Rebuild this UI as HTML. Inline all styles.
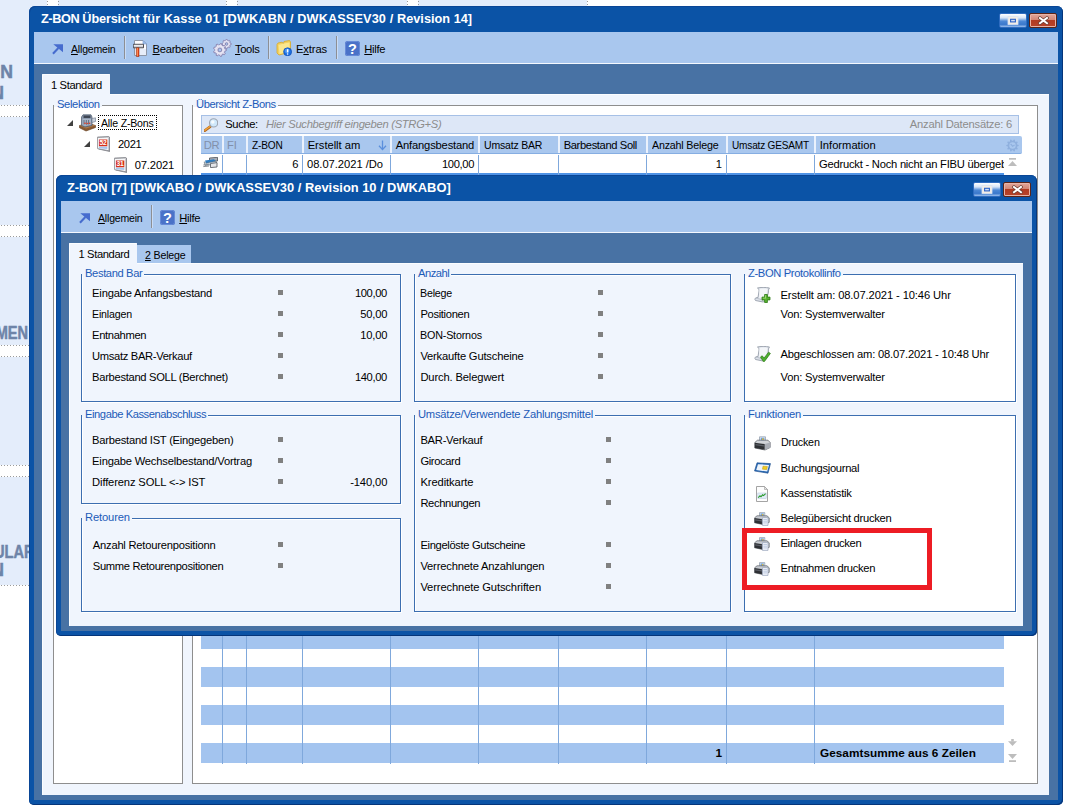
<!DOCTYPE html>
<html lang="de">
<head>
<meta charset="utf-8">
<title>Z-BON Übersicht</title>
<style>
*{box-sizing:border-box;margin:0;padding:0}
html,body{width:1065px;height:811px;overflow:hidden}
body{position:relative;background:#fff;font-family:"Liberation Sans",sans-serif;font-size:11.2px;color:#000;line-height:14px}
.a{position:absolute}
.t{position:absolute;white-space:nowrap;line-height:14px;height:14px}
.b{font-weight:bold}
u{text-decoration:underline;text-underline-offset:1px}
.tile{position:absolute;background:#e4edfb}
.hd{position:absolute;height:1px;background:repeating-linear-gradient(90deg,transparent 0 1px,#9a9a9a 1px 2px,transparent 2px 3px)}
.vd{position:absolute;width:1px;background:repeating-linear-gradient(180deg,transparent 0 1px,#9a9a9a 1px 2px,transparent 2px 3px)}
.bgt{position:absolute;font-weight:bold;font-size:17.6px;line-height:17px;color:#6e84a8;-webkit-text-stroke:.5px #6e84a8;white-space:nowrap}
.win{position:absolute;background:#0b53a6;box-shadow:inset 1px 1px 0 #0a4696,inset -1px -1px 0 #05357a}
.ttl{position:absolute;color:#fff;font-weight:bold;font-size:13.5px;line-height:16px;white-space:pre}
.tb{position:absolute;background:#a9c7ee;border-bottom:1px solid #f4f8fe}
.cl{position:absolute;background:#4872a4}
.pg{position:absolute;background:#f0f5fd;box-shadow:inset 1px 1px 0 #fbfdff}
.sep{position:absolute;width:2px;background:linear-gradient(90deg,#8d8f94 0 1px,#c9dcf6 1px 2px)}
.gb{position:absolute;border:1px solid #3c6eb0;box-shadow:1px 1px 0 #fff,inset 1px 1px 0 #fff}
.gbg{position:absolute;border:1px solid #8e8e8e;background:#fff}
.gl{position:absolute;color:#1c5bb8;background:#f0f5fd;white-space:nowrap;line-height:13px;height:9px;padding:0 2px 0 3px}
.sq{position:absolute;width:5px;height:5px;background:#808080}
.bmax{position:absolute;width:28px;height:15px;border-radius:2px;background:linear-gradient(180deg,#ffffff 0%,#d5e4f8 30%,#4c88d6 55%,#3a78cc 80%,#9cc0ee 100%);border:1px solid #2f6cc0}
.bmax i{position:absolute;left:8px;top:2px;width:10px;height:8px;background:#efe9e2;border:1px solid #d5deec}
.bmax i:after{content:"";position:absolute;left:1px;top:1px;width:6px;height:4px;border:1px solid #2a64c0;background:#dfe8f5}
.bcls{position:absolute;width:28px;height:15px;border-radius:2px;background:linear-gradient(180deg,#e0a79c 0%,#d28675 45%,#b23b22 50%,#b8442b 100%);border:1px solid #5b2418;box-shadow:inset 0 0 0 1px #e7b4a8}
.stripe{position:absolute;background:#a3c4ef}
.vl{position:absolute;width:1px;background:#7fa8dc}
</style>
</head>
<body>
<div class="tile" style="left:0px;top:0;width:47px;height:105px"></div>
<div class="tile" style="left:58px;top:0;width:168px;height:105px"></div>
<div class="tile" style="left:237px;top:0;width:170px;height:105px"></div>
<div class="tile" style="left:418px;top:0;width:169px;height:105px"></div>
<div class="tile" style="left:0;top:117px;width:47px;height:108px"></div>
<div class="tile" style="left:0;top:237px;width:47px;height:108px"></div>
<div class="tile" style="left:0;top:357px;width:47px;height:108px"></div>
<div class="tile" style="left:0;top:477px;width:47px;height:108px"></div>
<div class="hd" style="left:0;top:105px;width:29px"></div>
<div class="hd" style="left:0;top:116px;width:29px"></div>
<div class="hd" style="left:0;top:225px;width:29px"></div>
<div class="hd" style="left:0;top:236px;width:29px"></div>
<div class="hd" style="left:0;top:345px;width:29px"></div>
<div class="hd" style="left:0;top:356px;width:29px"></div>
<div class="hd" style="left:0;top:465px;width:29px"></div>
<div class="hd" style="left:0;top:476px;width:29px"></div>
<div class="hd" style="left:0;top:585px;width:29px"></div>
<div class="vd" style="left:47px;top:0;height:6px"></div>
<div class="vd" style="left:58px;top:0;height:6px"></div>
<div class="vd" style="left:226px;top:0;height:6px"></div>
<div class="vd" style="left:237px;top:0;height:6px"></div>
<div class="vd" style="left:407px;top:0;height:6px"></div>
<div class="vd" style="left:418px;top:0;height:6px"></div>
<div class="vd" style="left:587px;top:0;height:6px"></div>
<div class="bgt" style="right:1052px;top:64px">N</div>
<div class="bgt" style="right:1061px;top:85px">N</div>
<div class="bgt" style="right:1036.5px;top:325px;transform:scaleX(.83);transform-origin:100% 50%">MEN</div>
<div class="bgt" style="left:-6px;top:543.5px;transform:scaleX(.83);transform-origin:0 50%">ULARE</div>
<div class="bgt" style="right:1061px;top:562px">N</div>
<div class="win" style="left:29px;top:6px;width:1034px;height:799px;border-radius:6px 6px 5px 5px"></div>
<div class="ttl" style="left:40.7px;top:11px;transform:scaleX(0.9420);transform-origin:0 50%"><span style="font-size:13.5px;letter-spacing:-0.43px;">Z-BON </span><span style="font-size:13.5px;letter-spacing:-0.17px;">Übersicht </span><span style="font-size:13.5px;letter-spacing:0.09px;">für Kasse 01 </span><span style="font-size:13.5px;letter-spacing:0.13px;">[DWKABN / </span><span style="font-size:13.5px;letter-spacing:0.12px;">DWKASSEV30 / </span><span style="font-size:13.5px;letter-spacing:0.02px;">Revision 14]</span></div>
<div class="bmax" style="left:999px;top:13px"><svg class="a" style="left:-1px;top:-1px" width="28" height="15" viewBox="0 0 28 15"><rect x="9" y="3.5" width="10" height="8" fill="#f2ede6" stroke="#dbe4f2" stroke-width=".8"/><rect x="11.6" y="6.3" width="4.8" height="2.6" fill="#d4e0f4" stroke="#2a62c8" stroke-width="1.1"/></svg></div>
<div class="bcls" style="left:1029px;top:13px"><svg class="a" style="left:8px;top:2px" width="11" height="9" viewBox="0 0 11 9"><path d="M2 2 L9 7.2 M9 2 L2 7.2" stroke="#6a3a30" stroke-width="3.4" stroke-linecap="square"/><path d="M2 2 L9 7.2 M9 2 L2 7.2" stroke="#fff" stroke-width="2" stroke-linecap="square"/></svg></div>
<div class="tb" style="left:34px;top:32px;width:1024px;height:32px"></div>
<div class="cl" style="left:34px;top:64px;width:1024px;height:736px"></div>
<svg class="a" style="left:52px;top:44px" width="12" height="11" viewBox="0 0 12 11"><path d="M1.3 0.2 H11 V8.3Z M6.9 4.9 L1.7 10.4 L0.2 9 L5.4 3.5Z" fill="#466cce"/></svg>
<div class="t" style="left:70.5px;top:42px;letter-spacing:-0.20px;transform:scaleX(0.940);transform-origin:0 50%;"><u>A</u>llgemein</div>
<div class="sep" style="left:124px;top:36px;height:23px"></div>
<svg class="a" style="left:133px;top:40px" width="15" height="17" viewBox="0 0 15 17"><path d="M1.5 0.5H10L13.5 4V15.5H1.5Z" fill="#fdfdff" stroke="#8e96a6"/><path d="M10 0.5V4H13.5Z" fill="#9ec0ee" stroke="#7d9fd0" stroke-width=".6"/><path d="M2 9H13V15H2Z" fill="#dde6f6" opacity=".7"/><path d="M0.3 4.3H10.5V7.8H0.3Z" fill="#cfcfd4" stroke="#3c3c42" stroke-width=".9"/><path d="M0.8 4.9H10V5.8H0.8Z" fill="#f4f4f6"/><path d="M3.4 7.8H6V16.6H3.4Z" fill="#e8431c" stroke="#8c2a10" stroke-width=".5"/><path d="M3.9 8H4.8V16H3.9Z" fill="#ff9a5a"/></svg>
<div class="t" style="left:152.5px;top:42px;letter-spacing:-0.26px;"><u>B</u>earbeiten</div>
<svg class="a" style="left:213px;top:39px" width="19" height="18" viewBox="0 0 19 18"><path d="M18.28 4.54 L18.28 5.46 L17.04 6.05 L16.77 6.70 L17.23 7.98 L16.58 8.63 L15.30 8.17 L14.65 8.44 L14.06 9.68 L13.14 9.68 L12.55 8.44 L11.90 8.17 L10.62 8.63 L9.97 7.98 L10.43 6.70 L10.16 6.05 L8.92 5.46 L8.92 4.54 L10.16 3.95 L10.43 3.30 L9.97 2.02 L10.62 1.37 L11.90 1.83 L12.55 1.56 L13.14 0.32 L14.06 0.32 L14.65 1.56 L15.30 1.83 L16.58 1.37 L17.23 2.02 L16.77 3.30 L17.04 3.95Z M14.90 5.00 A1.3 1.3 0 1 0 12.30 5.00 A1.3 1.3 0 1 0 14.90 5.00Z" fill="#d9d7ec" stroke="#8682b0" stroke-width=".9" fill-rule="evenodd"/><path d="M16.48 4.39 L16.48 5.01 L16.36 5.63 L16.12 6.21 L15.77 6.73 L15.33 7.17 L14.81 7.52 L14.23 7.76 L13.61 7.88 L12.99 7.88 L12.37 7.76 L11.79 7.52 L11.27 7.17 L10.83 6.73 L10.48 6.21 L10.24 5.63 L10.12 5.01 L10.12 4.39 L10.24 3.77 L10.48 3.19 L10.83 2.67 L11.27 2.23 L11.79 1.88 L12.37 1.64 L12.99 1.52 L13.61 1.52 L14.23 1.64 L14.81 1.88 L15.33 2.23 L15.77 2.67 L16.12 3.19 L16.36 3.77Z M15.50 4.70 A2.2 2.2 0 1 0 11.10 4.70 A2.2 2.2 0 1 0 15.50 4.70Z" fill="#efeef8" opacity=".6" fill-rule="evenodd"/><path d="M13.38 10.43 L13.38 11.57 L11.83 12.32 L11.52 13.16 L12.22 14.73 L11.50 15.60 L9.83 15.18 L9.06 15.62 L8.58 17.28 L7.47 17.48 L6.46 16.08 L5.58 15.93 L4.15 16.89 L3.17 16.32 L3.29 14.61 L2.72 13.93 L1.01 13.75 L0.62 12.68 L1.82 11.44 L1.82 10.56 L0.62 9.32 L1.01 8.25 L2.72 8.07 L3.29 7.39 L3.17 5.68 L4.15 5.11 L5.58 6.07 L6.46 5.92 L7.47 4.52 L8.58 4.72 L9.06 6.38 L9.83 6.82 L11.50 6.40 L12.22 7.27 L11.52 8.84 L11.83 9.68Z M8.80 11.00 A1.9 1.9 0 1 0 5.00 11.00 A1.9 1.9 0 1 0 8.80 11.00Z" fill="#dcdaee" stroke="#827eac" stroke-width=".9" fill-rule="evenodd"/><path d="M10.88 10.22 L10.88 10.98 L10.75 11.74 L10.49 12.46 L10.10 13.12 L9.61 13.71 L9.02 14.20 L8.36 14.59 L7.64 14.85 L6.88 14.98 L6.12 14.98 L5.36 14.85 L4.64 14.59 L3.98 14.20 L3.39 13.71 L2.90 13.12 L2.51 12.46 L2.25 11.74 L2.12 10.98 L2.12 10.22 L2.25 9.46 L2.51 8.74 L2.90 8.08 L3.39 7.49 L3.98 7.00 L4.64 6.61 L5.36 6.35 L6.12 6.22 L6.88 6.22 L7.64 6.35 L8.36 6.61 L9.02 7.00 L9.61 7.49 L10.10 8.08 L10.49 8.74 L10.75 9.46Z M9.50 10.60 A3 3 0 1 0 3.50 10.60 A3 3 0 1 0 9.50 10.60Z" fill="#f1f0f9" opacity=".6" fill-rule="evenodd"/></svg>
<div class="t" style="left:235px;top:42px;letter-spacing:-0.35px;"><u>T</u>ools</div>
<div class="sep" style="left:268px;top:36px;height:23px"></div>
<svg class="a" style="left:276px;top:40px" width="16" height="16" viewBox="0 0 16 16"><path d="M1 4.5 L2 3 L6 2.2 L7.5 3.5 L8 1.5 L13.5 0.5 L14.5 2 V12 L3 15 L1 13Z" fill="#f3d160" stroke="#d9a928" stroke-width=".8"/><path d="M2.5 5 L8 3.5 L13.5 2.5 V11.5 L3.5 14Z" fill="#fbe78e"/><circle cx="11.6" cy="11.8" r="4" fill="#1c70e4" stroke="#0e4cb0" stroke-width=".7"/><circle cx="11" cy="10.8" r="2.4" fill="#5aa2f6" opacity=".7"/><path d="M11.6 9.2V12.4" stroke="#fff" stroke-width="1.5"/><circle cx="11.6" cy="14" r=".8" fill="#fff"/></svg>
<div class="t" style="left:296px;top:42px;letter-spacing:-0.12px;">E<u>x</u>tras</div>
<div class="sep" style="left:336px;top:36px;height:23px"></div>
<svg class="a" style="left:345px;top:41px" width="15" height="15" viewBox="0 0 15 15"><rect x="0" y="0" width="15" height="15" rx="2.5" fill="#4a72c8"/><rect x="0.5" y="0.5" width="14" height="14" rx="2.2" fill="none" stroke="#6f92dc" stroke-width=".8"/><text x="7.5" y="12.6" text-anchor="middle" font-family="Liberation Sans,sans-serif" font-weight="bold" font-size="14.5" fill="#fff">?</text></svg>
<div class="t" style="left:364.3px;top:42px;letter-spacing:-0.28px;"><u>H</u>ilfe</div>
<div class="pg" style="left:42px;top:94px;width:1006.5px;height:700.5px"></div>
<div class="pg" style="left:42px;top:74px;width:68px;height:21px;border-radius:1px 1px 0 0"></div>
<div class="t" style="left:51px;top:77.5px;letter-spacing:-0.38px;">1 Standard</div>
<div class="gbg" style="left:53px;top:105px;width:130px;height:679px"></div>
<div class="gl" style="left:54px;top:98px"><span style="letter-spacing:-0.37px;">Selektion</span></div>
<svg class="a" style="left:67px;top:120px" width="6" height="6"><path d="M6 0V6H0Z" fill="#404040"/></svg>
<svg class="a" style="left:78.5px;top:114px" width="17" height="18" viewBox="0 0 17 18"><path d="M0.5 11.5 L10 9.5 L16.5 11.5 V13.5 L7 17 L0.5 13.8Z" fill="#8a5a32" stroke="#5e3a1c" stroke-width=".6"/><path d="M0.5 11.5 L10 9.5 L16.5 11.5 L7 14.5Z" fill="#b07a48"/><path d="M2.5 3 L4 0.8 H12 L13 3 V11.5 L6 13 L2.5 11.5Z" fill="#8d9bb0" stroke="#4e5a6c" stroke-width=".7"/><path d="M4.5 1.5 H11.5 V4 H4.5Z" fill="#3e4654"/><path d="M3.5 5 H12 V10.5 L6 12 L3.5 11Z" fill="#a9b6c8"/><path d="M13 4.5 L16.5 3.8 V7.5 L13 8.5Z" fill="#c9d1dc" stroke="#6c7686" stroke-width=".6"/><path d="M5 6V10.5 M7.3 6V10.8 M9.6 6V10.5" stroke="#59667a" stroke-width=".9"/><rect x="5.3" y="8.6" width="1.4" height="1.4" fill="#e0422a"/><rect x="7.6" y="8.8" width="1.4" height="1.4" fill="#e0422a"/><rect x="9.9" y="8.6" width="1.4" height="1.4" fill="#e0422a"/></svg>
<div class="a" style="left:98px;top:115px;width:59px;height:15px;border:1px dotted #000"></div>
<div class="t" style="left:101px;top:115.5px;letter-spacing:-0.20px;transform:scaleX(0.946);transform-origin:0 50%;">Alle Z-Bons</div>
<svg class="a" style="left:84px;top:141px" width="6" height="6"><path d="M6 0V6H0Z" fill="#404040"/></svg>
<svg class="a" style="left:97px;top:136px" width="13" height="16" viewBox="0 0 13 16"><path d="M1.6 1.6 L13 1 V16 L1.6 13.6Z" fill="#8e9096"/><path d="M0.5 1 L12 0.5 V14.8 L0.5 12.6Z" fill="#f6f6f8" stroke="#8a8c92" stroke-width=".8"/><path d="M2 1 V2 M4 0.9 V1.9 M6 0.8 V1.8 M8 0.7 V1.7 M10 0.6 V1.6" stroke="#55585e" stroke-width=".8"/><rect x="1.9" y="3.5" width="8.4" height="6.8" fill="#d6301c"/><path d="M1.9 10.8 H10.3 V13 L1.9 12.2Z" fill="#a6c6ee"/><text x="6.1" y="9.3" text-anchor="middle" font-family="Liberation Sans,sans-serif" font-weight="bold" font-size="6.6" fill="#fff" textLength="7.4" lengthAdjust="spacingAndGlyphs">52</text></svg>
<div class="t" style="left:118px;top:136.5px;letter-spacing:-0.40px;">2021</div>
<svg class="a" style="left:114px;top:157px" width="13" height="16" viewBox="0 0 13 16"><path d="M1.6 1.6 L13 1 V16 L1.6 13.6Z" fill="#8e9096"/><path d="M0.5 1 L12 0.5 V14.8 L0.5 12.6Z" fill="#f6f6f8" stroke="#8a8c92" stroke-width=".8"/><path d="M2 1 V2 M4 0.9 V1.9 M6 0.8 V1.8 M8 0.7 V1.7 M10 0.6 V1.6" stroke="#55585e" stroke-width=".8"/><rect x="1.9" y="3.5" width="8.4" height="6.8" fill="#d6301c"/><path d="M1.9 10.8 H10.3 V13 L1.9 12.2Z" fill="#a6c6ee"/><text x="6.1" y="9.3" text-anchor="middle" font-family="Liberation Sans,sans-serif" font-weight="bold" font-size="6.6" fill="#fff" textLength="7.4" lengthAdjust="spacingAndGlyphs">31</text></svg>
<div class="t" style="left:134.7px;top:157.5px;letter-spacing:-0.14px;">07.2021</div>
<div class="gbg" style="left:192px;top:105px;width:846px;height:679px"></div>
<div class="gl" style="left:193px;top:98px"><span style="letter-spacing:-0.42px;">Übersicht Z-Bons</span></div>
<div class="a" style="left:201px;top:115px;width:818px;height:19px;background:#dde7f7;border:1px solid #a6c0e6"></div>
<svg class="a" style="left:204px;top:117.5px" width="14" height="14" viewBox="0 0 14 14"><path d="M0.8 12.6 L6.2 8.6" stroke="#b0661c" stroke-width="2.6" stroke-linecap="round"/><path d="M0.9 12.2 L6 8.5" stroke="#f6a63c" stroke-width="1.4" stroke-linecap="round"/><circle cx="9.6" cy="4.9" r="4.1" fill="#cfe8fb" stroke="#9ea6b2" stroke-width="1.1"/><circle cx="8.8" cy="4" r="1.8" fill="#fff" opacity=".8"/></svg>
<div class="t" style="left:225.3px;top:117px;letter-spacing:-0.39px;">Suche:</div>
<div class="t" style="left:266px;top:117px;letter-spacing:-0.28px;font-style:italic;color:#8c8c8c">Hier Suchbegriff eingeben (STRG+S)</div>
<div class="t" style="right:52.9px;top:117px;letter-spacing:-0.20px;color:#8c8c8c">Anzahl Datensätze: 6</div>
<div class="a" style="left:201px;top:136px;width:821px;height:18px;background:#a9c7ee;border-bottom:1px solid #86aee2;border-radius:0 2px 2px 0"></div>
<div class="a" style="left:222px;top:136px;width:2px;height:17px;background:#eaf1fc"></div>
<div class="a" style="left:246px;top:136px;width:2px;height:17px;background:#eaf1fc"></div>
<div class="a" style="left:302px;top:136px;width:2px;height:17px;background:#eaf1fc"></div>
<div class="a" style="left:390px;top:136px;width:2px;height:17px;background:#eaf1fc"></div>
<div class="a" style="left:478px;top:136px;width:2px;height:17px;background:#eaf1fc"></div>
<div class="a" style="left:558px;top:136px;width:2px;height:17px;background:#eaf1fc"></div>
<div class="a" style="left:646px;top:136px;width:2px;height:17px;background:#eaf1fc"></div>
<div class="a" style="left:726px;top:136px;width:2px;height:17px;background:#eaf1fc"></div>
<div class="a" style="left:814px;top:136px;width:2px;height:17px;background:#eaf1fc"></div>
<div class="t" style="left:203.7px;top:138px;letter-spacing:-0.20px;color:#8290aa;text-shadow:1px 1px 0 #f2f7fetransform:scaleX(0.862);transform-origin:0 50%;">DR</div>
<div class="t" style="left:227px;top:138px;letter-spacing:-0.20px;color:#8290aa;text-shadow:1px 1px 0 #f2f7fetransform:scaleX(0.942);transform-origin:0 50%;">FI</div>
<div class="t" style="left:251.7px;top:138px;letter-spacing:-0.20px;transform:scaleX(0.902);transform-origin:0 50%;">Z-BON</div>
<div class="t" style="left:307.7px;top:138px;letter-spacing:-0.03px;">Erstellt am</div>
<div class="t" style="left:395.7px;top:138px;letter-spacing:-0.17px;">Anfangsbestand</div>
<div class="t" style="left:483.7px;top:138px;letter-spacing:-0.20px;transform:scaleX(0.938);transform-origin:0 50%;">Umsatz BAR</div>
<div class="t" style="left:563.7px;top:138px;letter-spacing:-0.38px;">Barbestand Soll</div>
<div class="t" style="left:651.7px;top:138px;letter-spacing:-0.20px;transform:scaleX(0.955);transform-origin:0 50%;">Anzahl Belege</div>
<div class="t" style="left:731.7px;top:138px;letter-spacing:-0.20px;transform:scaleX(0.899);transform-origin:0 50%;">Umsatz GESAMT</div>
<div class="t" style="left:819.7px;top:138px;">Information</div>
<svg class="a" style="left:378px;top:140px" width="9" height="11" viewBox="0 0 9 11"><path d="M4.5 0.5V9 M1 5.8 L4.5 9.6 L8 5.8" fill="none" stroke="#5b8fdc" stroke-width="1.3"/></svg>
<svg class="a" style="left:1005.5px;top:138.5px" width="13" height="13" viewBox="0 0 13 13"><path d="M12.68 6.01 L12.68 6.99 L11.17 7.62 L10.93 8.34 L11.79 9.74 L11.21 10.53 L9.62 10.15 L9.01 10.59 L8.87 12.23 L7.95 12.53 L6.88 11.29 L6.12 11.29 L5.05 12.53 L4.13 12.23 L3.99 10.59 L3.38 10.15 L1.79 10.53 L1.21 9.74 L2.07 8.34 L1.83 7.62 L0.32 6.99 L0.32 6.01 L1.83 5.38 L2.07 4.66 L1.21 3.26 L1.79 2.47 L3.38 2.85 L3.99 2.41 L4.13 0.77 L5.05 0.47 L6.12 1.71 L6.88 1.71 L7.95 0.47 L8.87 0.77 L9.01 2.41 L9.62 2.85 L11.21 2.47 L11.79 3.26 L10.93 4.66 L11.17 5.38Z M9.70 6.50 A3.2 3.2 0 1 0 3.30 6.50 A3.2 3.2 0 1 0 9.70 6.50Z" fill="#8fb0de" fill-rule="evenodd"/><path d="M4.6 4.8 L6.6 7.2 L8.6 6" fill="none" stroke="#8fb0de" stroke-width="1.2"/></svg>
<div class="stripe" style="left:201px;top:173px;width:803px;height:20px;background:#4f93e6"></div>
<div class="stripe" style="left:201px;top:211px;width:803px;height:20px"></div>
<div class="stripe" style="left:201px;top:249px;width:803px;height:20px"></div>
<div class="stripe" style="left:201px;top:287px;width:803px;height:20px"></div>
<div class="stripe" style="left:201px;top:325px;width:803px;height:20px"></div>
<div class="stripe" style="left:201px;top:363px;width:803px;height:20px"></div>
<div class="stripe" style="left:201px;top:401px;width:803px;height:20px"></div>
<div class="stripe" style="left:201px;top:439px;width:803px;height:20px"></div>
<div class="stripe" style="left:201px;top:477px;width:803px;height:20px"></div>
<div class="stripe" style="left:201px;top:515px;width:803px;height:20px"></div>
<div class="stripe" style="left:201px;top:553px;width:803px;height:20px"></div>
<div class="stripe" style="left:201px;top:591px;width:803px;height:20px"></div>
<div class="stripe" style="left:201px;top:629px;width:803px;height:20px"></div>
<div class="stripe" style="left:201px;top:667px;width:803px;height:20px"></div>
<div class="stripe" style="left:201px;top:705px;width:803px;height:20px"></div>
<div class="stripe" style="left:201px;top:743px;width:803px;height:20px"></div>
<div class="vl" style="left:222px;top:155px;height:609px"></div>
<div class="vl" style="left:246px;top:155px;height:609px"></div>
<div class="vl" style="left:302px;top:155px;height:609px"></div>
<div class="vl" style="left:390px;top:155px;height:609px"></div>
<div class="vl" style="left:478px;top:155px;height:609px"></div>
<div class="vl" style="left:558px;top:155px;height:609px"></div>
<div class="vl" style="left:646px;top:155px;height:609px"></div>
<div class="vl" style="left:726px;top:155px;height:609px"></div>
<div class="vl" style="left:814px;top:155px;height:609px"></div>
<svg class="a" style="left:203px;top:157px" width="15" height="11" viewBox="0 0 15 11"><path d="M6.5 1 L14.5 0.3 V4 L6.5 4.5Z" fill="#a9adb4" stroke="#4e535b" stroke-width=".8"/><path d="M2 3.6 L11 2.2 L13 4.2 L3 6.4Z" fill="#2f7cc0"/><path d="M1.2 4.8 L3 6.4 L13 4.2 L13.8 6.8 L2 8.6Z" fill="#d9e6f2" stroke="#5d6874" stroke-width=".6"/><path d="M7.5 6.5 L14 5.6 V10 L7.5 10.6Z" fill="#e3e5e8" stroke="#4e535b" stroke-width=".8"/><path d="M0.3 8 L6.5 7.2 M0.3 9.6 L6 9 " stroke="#7c828a" stroke-width=".9"/></svg>
<div class="t" style="right:766.5px;top:157px;">6</div>
<div class="t" style="left:307px;top:157px;letter-spacing:-0.04px;">08.07.2021 /Do</div>
<div class="t" style="right:590.9px;top:157px;letter-spacing:-0.35px;">100,00</div>
<div class="t" style="right:343.0px;top:157px;">1</div>
<div class="a" style="left:819px;top:157px;width:185px;height:14px;overflow:hidden"><div class="t" style="left:0px;top:0px;letter-spacing:-0.23px;">Gedruckt - Noch nicht an FIBU übergeben</div></div>
<div class="t b" style="right:343.0px;top:746px;font-size:11.8px;">1</div>
<div class="t b" style="left:820px;top:746px;font-size:11.8px;letter-spacing:0.02px;">Gesamtsumme aus 6 Zeilen</div>
<svg class="a" style="left:1008px;top:158px" width="10" height="9" viewBox="0 0 10 9"><rect x="1" y="0" width="7" height="1.7" fill="#bdbdbd"/><path d="M0 8 L4.5 3 L9 8Z" fill="#bdbdbd"/></svg><svg class="a" style="left:1008px;top:739px" width="10" height="8" viewBox="0 0 10 8"><rect x="3.2" y="0" width="2.6" height="2.4" fill="#bdbdbd"/><path d="M0 2.2 H9 L4.5 7Z" fill="#bdbdbd"/></svg><svg class="a" style="left:1008px;top:754px" width="10" height="9" viewBox="0 0 10 9"><path d="M0 0 H9 L4.5 5Z" fill="#bdbdbd"/><rect x="1" y="6.2" width="7" height="1.8" fill="#bdbdbd"/></svg>
<div class="win" style="left:56px;top:175px;width:981px;height:461px;border-radius:6px 6px 5px 5px"></div>
<div class="ttl" style="left:67.3px;top:180px;transform:scaleX(0.9543);transform-origin:0 50%"><span style="font-size:13.5px;letter-spacing:-0.04px;">Z-BON [7] </span><span style="font-size:13.5px;letter-spacing:0.03px;">[DWKABO / </span><span style="font-size:13.5px;letter-spacing:0.04px;">DWKASSEV30 / </span><span style="font-size:13.5px;letter-spacing:-0.02px;">Revision 10 / DWKABO]</span></div>
<div class="bmax" style="left:973px;top:182px"><svg class="a" style="left:-1px;top:-1px" width="28" height="15" viewBox="0 0 28 15"><rect x="9" y="3.5" width="10" height="8" fill="#f2ede6" stroke="#dbe4f2" stroke-width=".8"/><rect x="11.6" y="6.3" width="4.8" height="2.6" fill="#d4e0f4" stroke="#2a62c8" stroke-width="1.1"/></svg></div>
<div class="bcls" style="left:1003px;top:182px"><svg class="a" style="left:8px;top:2px" width="11" height="9" viewBox="0 0 11 9"><path d="M2 2 L9 7.2 M9 2 L2 7.2" stroke="#6a3a30" stroke-width="3.4" stroke-linecap="square"/><path d="M2 2 L9 7.2 M9 2 L2 7.2" stroke="#fff" stroke-width="2" stroke-linecap="square"/></svg></div>
<div class="tb" style="left:61px;top:201px;width:971px;height:32px"></div>
<div class="cl" style="left:61px;top:233px;width:971px;height:398px"></div>
<svg class="a" style="left:79px;top:213px" width="12" height="11" viewBox="0 0 12 11"><path d="M1.3 0.2 H11 V8.3Z M6.9 4.9 L1.7 10.4 L0.2 9 L5.4 3.5Z" fill="#466cce"/></svg>
<div class="t" style="left:97.5px;top:211px;letter-spacing:-0.20px;transform:scaleX(0.940);transform-origin:0 50%;"><u>A</u>llgemein</div>
<div class="sep" style="left:151px;top:205px;height:23px"></div>
<svg class="a" style="left:160px;top:210px" width="15" height="15" viewBox="0 0 15 15"><rect x="0" y="0" width="15" height="15" rx="2.5" fill="#4a72c8"/><rect x="0.5" y="0.5" width="14" height="14" rx="2.2" fill="none" stroke="#6f92dc" stroke-width=".8"/><text x="7.5" y="12.6" text-anchor="middle" font-family="Liberation Sans,sans-serif" font-weight="bold" font-size="14.5" fill="#fff">?</text></svg>
<div class="t" style="left:179.3px;top:211px;letter-spacing:-0.28px;"><u>H</u>ilfe</div>
<div class="a" style="left:136px;top:245px;width:55px;height:18px;background:#a9c7ee"></div>
<div class="t" style="left:144.8px;top:248px;letter-spacing:-0.20px;transform:scaleX(0.951);transform-origin:0 50%;"><u>2</u> Belege</div>
<div class="pg" style="left:69px;top:263px;width:954px;height:362.5px"></div>
<div class="pg" style="left:69px;top:243px;width:68px;height:21px;border-radius:1px 1px 0 0"></div>
<div class="t" style="left:78.5px;top:246.5px;letter-spacing:-0.38px;">1 Standard</div>
<div class="gb" style="left:81px;top:274px;width:320px;height:128px"></div>
<div class="gl" style="left:82px;top:267px"><span style="letter-spacing:-0.38px;">Bestand Bar</span></div>
<div class="t" style="left:92.1px;top:286px;letter-spacing:-0.20px;">Eingabe Anfangsbestand</div>
<div class="sq" style="left:278px;top:290px"></div>
<div class="t" style="right:678.0px;top:286px;letter-spacing:-0.35px;">100,00</div>
<div class="t" style="left:92.1px;top:307px;letter-spacing:-0.20px;transform:scaleX(0.951);transform-origin:0 50%;">Einlagen</div>
<div class="sq" style="left:278px;top:311px"></div>
<div class="t" style="right:677.8px;top:307px;letter-spacing:-0.20px;">50,00</div>
<div class="t" style="left:92.1px;top:328px;letter-spacing:-0.35px;">Entnahmen</div>
<div class="sq" style="left:278px;top:332px"></div>
<div class="t" style="right:677.8px;top:328px;letter-spacing:-0.20px;">10,00</div>
<div class="t" style="left:92.1px;top:349px;letter-spacing:-0.33px;">Umsatz BAR-Verkauf</div>
<div class="sq" style="left:278px;top:353px"></div>
<div class="t" style="left:92.1px;top:370px;letter-spacing:-0.31px;">Barbestand SOLL (Berchnet)</div>
<div class="sq" style="left:278px;top:374px"></div>
<div class="t" style="right:678.0px;top:370px;letter-spacing:-0.35px;">140,00</div>
<div class="gb" style="left:81px;top:415px;width:320px;height:89px"></div>
<div class="gl" style="left:82px;top:408px"><span style="letter-spacing:-0.44px;">Eingabe Kassenabschluss</span></div>
<div class="t" style="left:92.1px;top:433px;letter-spacing:-0.24px;">Barbestand IST (Eingegeben)</div>
<div class="sq" style="left:278px;top:437px"></div>
<div class="t" style="left:92.1px;top:454px;letter-spacing:-0.20px;">Eingabe Wechselbestand/Vortrag</div>
<div class="sq" style="left:278px;top:458px"></div>
<div class="t" style="left:92.1px;top:475px;letter-spacing:-0.14px;">Differenz SOLL &lt;-&gt; IST</div>
<div class="sq" style="left:278px;top:479px"></div>
<div class="t" style="right:677.7px;top:475px;letter-spacing:-0.11px;">-140,00</div>
<div class="gb" style="left:81px;top:518px;width:320px;height:94px"></div>
<div class="gl" style="left:82px;top:511px"><span style="letter-spacing:-0.14px;">Retouren</span></div>
<div class="t" style="left:92.8px;top:538px;letter-spacing:-0.23px;">Anzahl Retourenpositionn</div>
<div class="sq" style="left:278px;top:542px"></div>
<div class="t" style="left:92.8px;top:559px;letter-spacing:-0.34px;">Summe Retourenpositionen</div>
<div class="sq" style="left:278px;top:563px"></div>
<div class="gb" style="left:414px;top:274px;width:317px;height:128px"></div>
<div class="gl" style="left:415px;top:267px"><span style="letter-spacing:-0.47px;">Anzahl</span></div>
<div class="t" style="left:420.4px;top:286px;letter-spacing:-0.20px;transform:scaleX(0.954);transform-origin:0 50%;">Belege</div>
<div class="sq" style="left:598px;top:290px"></div>
<div class="t" style="left:420.4px;top:307px;letter-spacing:-0.33px;">Positionen</div>
<div class="sq" style="left:598px;top:311px"></div>
<div class="t" style="left:420.4px;top:328px;letter-spacing:-0.20px;transform:scaleX(0.962);transform-origin:0 50%;">BON-Stornos</div>
<div class="sq" style="left:598px;top:332px"></div>
<div class="t" style="left:420.4px;top:349px;letter-spacing:-0.19px;">Verkaufte Gutscheine</div>
<div class="sq" style="left:598px;top:353px"></div>
<div class="t" style="left:420.4px;top:370px;letter-spacing:-0.14px;">Durch. Belegwert</div>
<div class="sq" style="left:598px;top:374px"></div>
<div class="gb" style="left:414px;top:415px;width:317px;height:197px"></div>
<div class="gl" style="left:415px;top:408px"><span style="letter-spacing:-0.22px;">Umsätze/Verwendete Zahlungsmittel</span></div>
<div class="t" style="left:420.4px;top:433px;letter-spacing:-0.25px;">BAR-Verkauf</div>
<div class="sq" style="left:606px;top:437px"></div>
<div class="t" style="left:420.4px;top:454px;letter-spacing:-0.38px;">Girocard</div>
<div class="sq" style="left:606px;top:458px"></div>
<div class="t" style="left:420.4px;top:475px;letter-spacing:-0.09px;">Kreditkarte</div>
<div class="sq" style="left:606px;top:479px"></div>
<div class="t" style="left:420.4px;top:496px;letter-spacing:-0.37px;">Rechnungen</div>
<div class="sq" style="left:606px;top:500px"></div>
<div class="t" style="left:420.4px;top:538px;letter-spacing:-0.34px;">Eingelöste Gutscheine</div>
<div class="sq" style="left:606px;top:542px"></div>
<div class="t" style="left:420.4px;top:559px;letter-spacing:-0.18px;">Verrechnete Anzahlungen</div>
<div class="sq" style="left:606px;top:563px"></div>
<div class="t" style="left:420.4px;top:580px;letter-spacing:-0.13px;">Verrechnete Gutschriften</div>
<div class="sq" style="left:606px;top:584px"></div>
<div class="gb" style="left:744px;top:274px;width:272px;height:128px;background:#fff"></div>
<div class="gl" style="left:745px;top:267px"><span style="letter-spacing:-0.36px;">Z-BON Protokollinfo</span></div>
<svg class="a" style="left:754px;top:287px" width="17" height="16" viewBox="0 0 17 16"><path d="M3.5 1 C6 0.2 12 0.2 15.5 1 C14.5 2.2 14.2 3.6 14.5 5 L13 11 C12.5 13 11 14.5 9 15 L1.5 13.5 C0.5 12.5 0.8 11.2 2 10.8 L4 10.5 L5 4 C5.2 2.6 4.6 1.6 3.5 1Z" fill="#dde2ea" stroke="#8e96a2" stroke-width=".8"/><path d="M5.5 2 C8 1.4 11.5 1.4 13.6 2 L12 10.5 L5 10.8Z" fill="#f4f6f9"/><path d="M2 11 C4 11.6 6.5 12.2 9 13.6" fill="none" stroke="#aab1bb" stroke-width=".7"/><path d="M10.6 7.5 H13.4 V10.1 H16 V12.9 H13.4 V15.5 H10.6 V12.9 H8 V10.1 H10.6Z" fill="#58b030" stroke="#2c7a14" stroke-width=".8"/><path d="M11.2 8.2 H12 V10.8 H11.2Z M8.8 10.8 H12 V11.5 H8.8Z" fill="#a6e07c"/></svg><svg class="a" style="left:754px;top:346px" width="17" height="16" viewBox="0 0 17 16"><path d="M3.5 1 C6 0.2 12 0.2 15.5 1 C14.5 2.2 14.2 3.6 14.5 5 L13 11 C12.5 13 11 14.5 9 15 L1.5 13.5 C0.5 12.5 0.8 11.2 2 10.8 L4 10.5 L5 4 C5.2 2.6 4.6 1.6 3.5 1Z" fill="#dde2ea" stroke="#8e96a2" stroke-width=".8"/><path d="M5.5 2 C8 1.4 11.5 1.4 13.6 2 L12 10.5 L5 10.8Z" fill="#f4f6f9"/><path d="M2 11 C4 11.6 6.5 12.2 9 13.6" fill="none" stroke="#aab1bb" stroke-width=".7"/><path d="M6.5 11 L8.2 9.8 L10 12.2 L14.6 6.2 L16.4 7.4 L10.4 15.6 H9.4Z" fill="#4eb030" stroke="#2c7a14" stroke-width=".7"/></svg>
<div class="t" style="left:780.5px;top:288px;letter-spacing:-0.11px;">Erstellt am: 08.07.2021 - 10:46 Uhr</div>
<div class="t" style="left:780.5px;top:307px;letter-spacing:-0.20px;">Von: Systemverwalter</div>
<div class="t" style="left:780.5px;top:347px;letter-spacing:-0.18px;">Abgeschlossen am: 08.07.2021 - 10:48 Uhr</div>
<div class="t" style="left:780.5px;top:370px;letter-spacing:-0.20px;">Von: Systemverwalter</div>
<div class="gb" style="left:744px;top:415px;width:272px;height:197px;background:#fff"></div>
<div class="gl" style="left:745px;top:408px"><span style="letter-spacing:-0.25px;">Funktionen</span></div>
<svg class="a" style="left:754px;top:435.5px" width="17" height="15" viewBox="0 0 17 15"><path d="M5.5 0.8 H11.5 V6 H5.5Z" fill="#dfe8f4" stroke="#8a96a8" stroke-width=".7"/><path d="M6.8 1.8 H10.4 V5 H6.8Z" fill="#6aa0dc"/><circle cx="8.8" cy="3.2" r="1" fill="#f0c030"/><path d="M0.8 6.5 L3.5 4.2 H14 L16.2 6.5 V11.5 L11 14 L0.8 12Z" fill="#d0d3d8" stroke="#5a5e66" stroke-width=".7"/><path d="M0.8 6.8 L10.8 8 V13.8 L0.8 12Z" fill="#2e3034"/><path d="M1.5 8 L10.2 9.2 V10.6 L1.5 9.3Z" fill="#5a5e66"/><path d="M10.8 8 L16.2 6.5 V11.5 L10.8 13.8Z" fill="#a8acb4"/></svg><svg class="a" style="left:754px;top:462px" width="17" height="12" viewBox="0 0 17 12"><path d="M3 0.8 L16.5 1.6 L14 11.2 L0.5 9Z" fill="#2a6ab4" stroke="#1c4c8c" stroke-width=".6"/><path d="M4 2.2 L15 2.9 L13.2 9.6 L2.2 8Z" fill="#eef4fb"/><path d="M9 4.2 L13.4 4.5 L12.8 7.6 L8.5 7.2Z" fill="#f0cc20" stroke="#b89410" stroke-width=".5"/></svg><svg class="a" style="left:756px;top:486px" width="12" height="16" viewBox="0 0 12 16"><path d="M0.5 0.5 H8.5 L11.5 3.5 V15.5 H0.5Z" fill="#fdfdfd" stroke="#9a9a9a" stroke-width=".9"/><path d="M8.5 0.5 V3.5 H11.5Z" fill="#e4e4e4" stroke="#9a9a9a" stroke-width=".6"/><rect x="1.8" y="7" width="8.4" height="5.6" fill="#e0ecf8" stroke="#b8c8dc" stroke-width=".5"/><path d="M2.2 11.6 L4 9.8 L5 10.8 L6.6 8.8 L7.6 9.6 L9.6 7.6" fill="none" stroke="#2c9a2c" stroke-width="1.1"/></svg><svg class="a" style="left:754px;top:512px" width="16" height="14" viewBox="0 0 16 14"><path d="M5.5 0.6 H10.8 V5 H5.5Z" fill="#dfe8f4" stroke="#8a96a8" stroke-width=".7"/><path d="M6.6 1.4 H9.8 V4.4 H6.6Z" fill="#6aa0dc"/><circle cx="8.6" cy="2.8" r=".9" fill="#f0c030"/><path d="M0.6 5.8 L3 3.8 H13 L15.2 5.8 V10.4 L9.5 12.6 L0.6 10.8Z" fill="#c8ccd2" stroke="#5a5e66" stroke-width=".7"/><path d="M0.6 6 L8.6 7.2 V12.4 L0.6 10.8Z" fill="#2e3034"/><path d="M1.2 7.2 L8 8.2 V9.4 L1.2 8.4Z" fill="#5a5e66"/><path d="M8.4 5.6 H14 V13.4 H8.4Z" fill="#eef2fa" stroke="#98a4ba" stroke-width=".7"/><path d="M9.4 7.5 H13 M9.4 9.2 H13 M9.4 10.9 H13" stroke="#b4c2dc" stroke-width=".8"/></svg><svg class="a" style="left:754px;top:537px" width="16" height="14" viewBox="0 0 16 14"><path d="M5.5 0.6 H10.8 V5 H5.5Z" fill="#dfe8f4" stroke="#8a96a8" stroke-width=".7"/><path d="M6.6 1.4 H9.8 V4.4 H6.6Z" fill="#6aa0dc"/><circle cx="8.6" cy="2.8" r=".9" fill="#f0c030"/><path d="M0.6 5.8 L3 3.8 H13 L15.2 5.8 V10.4 L9.5 12.6 L0.6 10.8Z" fill="#c8ccd2" stroke="#5a5e66" stroke-width=".7"/><path d="M0.6 6 L8.6 7.2 V12.4 L0.6 10.8Z" fill="#2e3034"/><path d="M1.2 7.2 L8 8.2 V9.4 L1.2 8.4Z" fill="#5a5e66"/><path d="M8.4 5.6 H14 V13.4 H8.4Z" fill="#eef2fa" stroke="#98a4ba" stroke-width=".7"/><path d="M9.4 7.5 H13 M9.4 9.2 H13 M9.4 10.9 H13" stroke="#b4c2dc" stroke-width=".8"/></svg><svg class="a" style="left:754px;top:562px" width="16" height="14" viewBox="0 0 16 14"><path d="M5.5 0.6 H10.8 V5 H5.5Z" fill="#dfe8f4" stroke="#8a96a8" stroke-width=".7"/><path d="M6.6 1.4 H9.8 V4.4 H6.6Z" fill="#6aa0dc"/><circle cx="8.6" cy="2.8" r=".9" fill="#f0c030"/><path d="M0.6 5.8 L3 3.8 H13 L15.2 5.8 V10.4 L9.5 12.6 L0.6 10.8Z" fill="#c8ccd2" stroke="#5a5e66" stroke-width=".7"/><path d="M0.6 6 L8.6 7.2 V12.4 L0.6 10.8Z" fill="#2e3034"/><path d="M1.2 7.2 L8 8.2 V9.4 L1.2 8.4Z" fill="#5a5e66"/><path d="M8.4 5.6 H14 V13.4 H8.4Z" fill="#eef2fa" stroke="#98a4ba" stroke-width=".7"/><path d="M9.4 7.5 H13 M9.4 9.2 H13 M9.4 10.9 H13" stroke="#b4c2dc" stroke-width=".8"/></svg>
<div class="t" style="left:780.5px;top:435px;letter-spacing:-0.20px;transform:scaleX(0.961);transform-origin:0 50%;">Drucken</div>
<div class="t" style="left:780.5px;top:461px;letter-spacing:-0.31px;">Buchungsjournal</div>
<div class="t" style="left:780.5px;top:486px;letter-spacing:-0.23px;">Kassenstatistik</div>
<div class="t" style="left:780.5px;top:511px;letter-spacing:-0.27px;">Belegübersicht drucken</div>
<div class="t" style="left:780.5px;top:536px;letter-spacing:-0.35px;">Einlagen drucken</div>
<div class="t" style="left:780.5px;top:561px;letter-spacing:-0.33px;">Entnahmen drucken</div>
<div class="a" style="left:742px;top:528px;width:190px;height:62px;border:5px solid #ed1c24"></div>
</body>
</html>
